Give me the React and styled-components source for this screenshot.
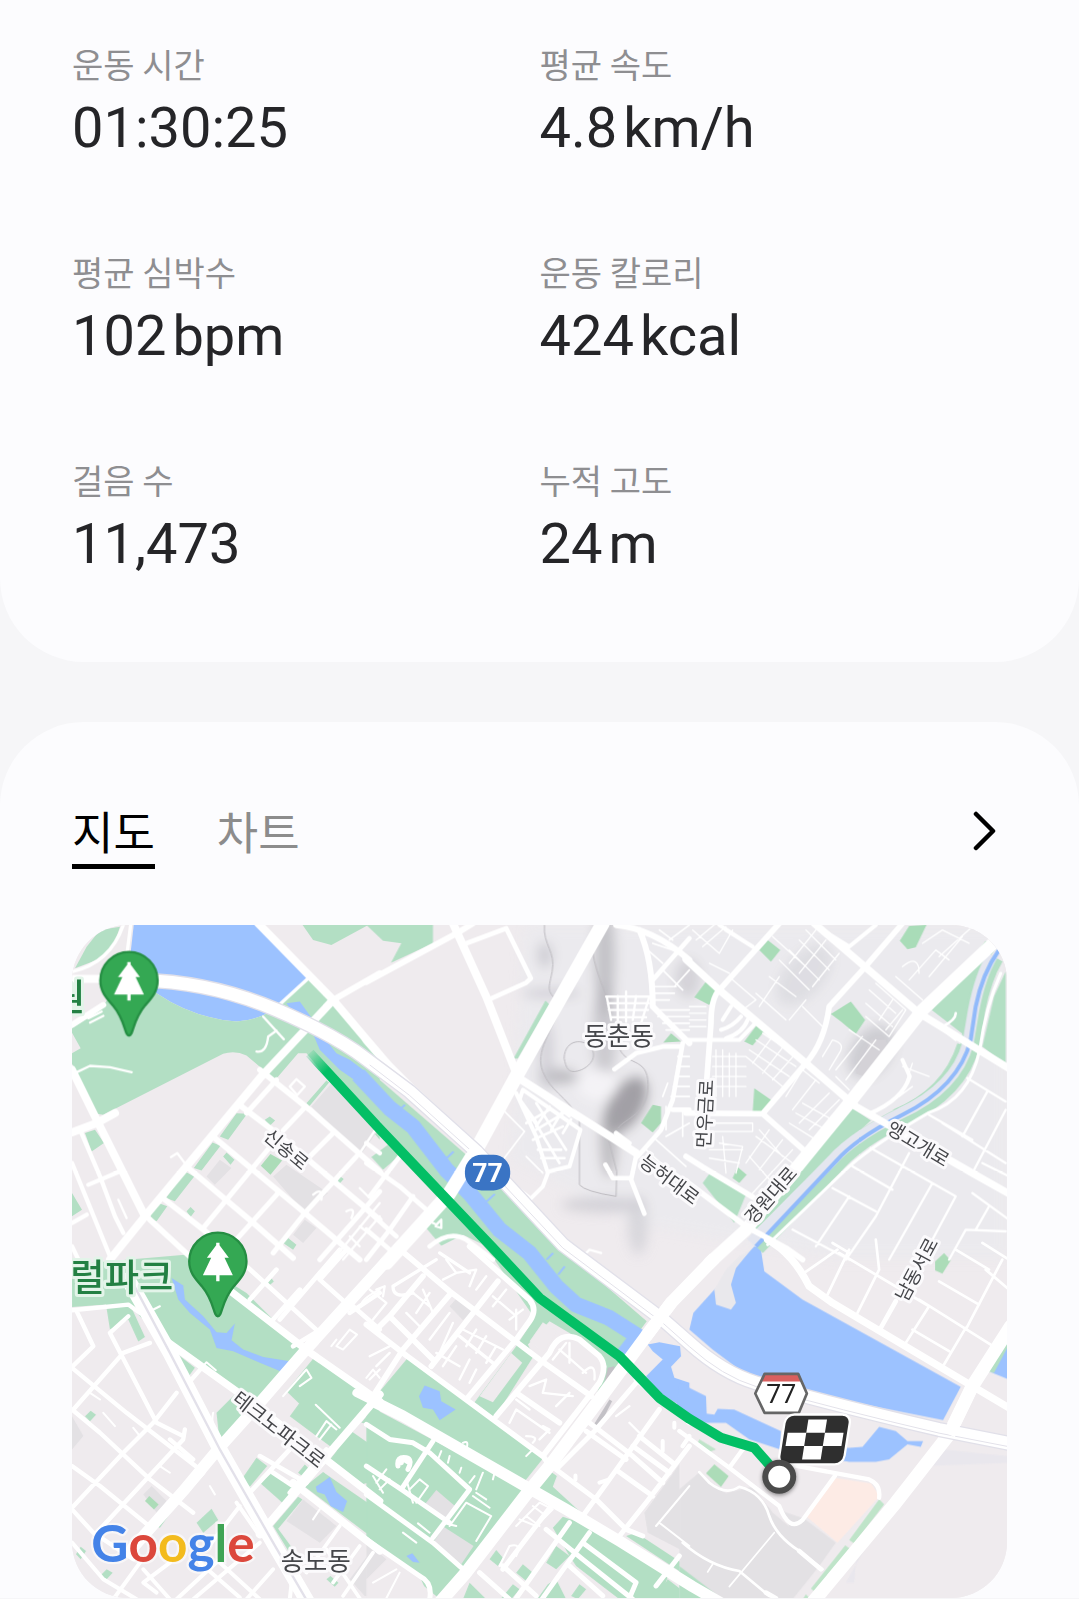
import React, { useState } from "react";
import styled, { createGlobalStyle } from "styled-components";

const GlobalStyle = createGlobalStyle`
  * {
    box-sizing: border-box;
  }
  body {
    margin: 0;
    background: #f6f6f8;
    font-family: "Noto Sans CJK KR", sans-serif;
  }
`;

const Page = styled.main`
  display: flex;
  flex-direction: column;
  gap: 60px;
`;
const StatsCard = styled.section`
  padding: 42px 72px 86px;
  background: #fcfcfe;
  border-radius: 0 0 84px 84px;
`;
const StatsGrid = styled.dl`
  display: grid;
  grid-template-columns: 1fr 1fr;
  row-gap: 90px;
  margin: 0;
`;
const Stat = styled.div`
  display: flex;
  flex-direction: column;
  gap: 10px;
`;
const StatLabel = styled.dt`
  color: #8e8e91;
  font-size: 34px;
  line-height: 44px;
`;
const StatValue = styled.dd`
  display: flex;
  align-items: baseline;
  gap: 6px;
  margin: 0;
  color: #252528;
  font-family: Roboto, sans-serif;
  font-size: 56px;
  line-height: 64px;
`;
const RouteCard = styled.section`
  padding: 81px 72px 0;
  background: #fcfcfe;
  border-radius: 84px 84px 0 0;
`;
const CardHeader = styled.header`
  display: flex;
  align-items: flex-start;
  justify-content: space-between;
  margin-bottom: 56px;
`;
const TabList = styled.div`
  display: flex;
  gap: 62px;
`;
const Tab = styled.button`
  padding: 0 0 5px;
  border: 0;
  border-bottom: 5px solid ${({ $active }) => ($active ? "#000" : "transparent")};
  background: none;
  color: ${({ $active }) => ($active ? "#000" : "#8c8c8c")};
  font-family: inherit;
  font-size: 45px;
  line-height: 56px;
  cursor: pointer;
`;
const MoreButton = styled.button`
  display: flex;
  align-items: center;
  justify-content: center;
  width: 46px;
  height: 56px;
  padding: 0;
  border: 0;
  background: none;
  cursor: pointer;
`;
const MapFrame = styled.div`
  overflow: hidden;
  border-radius: 56px;
  background: #efebee;
`;
const MapSvg = styled.svg`
  display: block;
  width: 100%;
  height: auto;
`;
const MapLabel = styled.text`
  fill: ${({ $park }) => ($park ? "#238043" : "#45464a")};
  stroke: ${({ $park }) => ($park ? "#e3f4e9" : "#fbfafc")};
  stroke-width: 18px;
  stroke-linejoin: round;
  paint-order: stroke;
  font-family: "Noto Sans CJK KR", sans-serif;
  font-size: ${({ $size }) => $size}px;
  font-weight: ${({ $park }) => ($park ? 500 : 400)};
  dominant-baseline: central;
  text-anchor: ${({ $anchor }) => $anchor || "middle"};
`;
const Shield = styled.text`
  fill: ${({ $color }) => $color};
  font-family: Roboto, sans-serif;
  font-size: 80px;
  font-weight: ${({ $weight }) => $weight};
  text-anchor: middle;
`;
const Wordmark = styled.text`
  font-family: Lato, sans-serif;
  font-size: 154px;
  font-weight: 700;
  stroke: #fff;
  stroke-width: 14px;
  stroke-opacity: 0.55;
  paint-order: stroke;
`;

const stats = [
  { label: "운동 시간", value: "01:30:25" },
  { label: "평균 속도", value: "4.8", unit: "km/h" },
  { label: "평균 심박수", value: "102", unit: "bpm" },
  { label: "운동 칼로리", value: "424", unit: "kcal" },
  { label: "걸음 수", value: "11,473" },
  { label: "누적 고도", value: "24", unit: "m" },
];

const GREEN = "#b3dfc4";
const WATER = "#9cc2ff";
const BLOCK = "#e3e1e4";
const LAND = "#efebee";

// The map is cut into six tiles; areas are [fill, path], roads are [width, path].
const tiles = [
  {
    x: -36,
    y: -45,
    areas: [
      [WATER, "M222 40H595L748 208L652 292Q600 330 530 335Q400 325 290 250L205 190Z"],
      [GREEN, "M30 358L120 300L200 190L290 250Q400 325 530 335Q600 330 652 292L748 208L820 270L960 420V690L740 430H715L648 508L605 475L560 437Q525 420 490 432L130 615L110 612L36 462V430L62 415Z"],
      [WATER, "M680 280L720 275L760 330L790 380L830 430L870 450L910 480L960 540V610L920 535L840 480L780 420L755 360L700 310Z"],
      [GREEN, "M45 175L80 110L120 60L180 50L160 110L110 150Z"],
      [GREEN, "M725 40L760 90L815 105L935 40Z"],
      [GREEN, "M530 610L562 612L505 690L480 680ZM458 698L482 708L425 782L402 775ZM375 785L403 800L345 875L318 865ZM295 880L322 890L290 935Q270 930 272 912Z"],
      [GREEN, "M75 670L105 660L132 700L95 725ZM615 630L630 620L646 632L630 648ZM490 740L500 728L524 750L512 765ZM740 580L800 512L808 518L748 590ZM380 905L392 892L405 905L392 922ZM830 818L842 800L852 808L836 826ZM670 1000L685 985L710 1005L700 1020ZM36 850L66 900L36 920Z"],
      [BLOCK, "M640 800L680 765L805 850L735 910ZM755 590L820 515L960 655L900 740ZM440 800L480 750L515 775L465 825ZM700 975L735 930L770 955L730 1000Z"],
      ["#acdcb8", "M603 768L632 733L667 752L632 795Z"],
    ],
    roads: [
      [10, "M36 185Q150 160 190 45M212 45L200 140M745 205L650 292"],
      [24, "M36 207L140 207M595 40L820 270L960 436M820 270L600 505L255 920L150 1050"],
      [18, "M36 345L130 285M820 270L960 190"],
      [24, "M36 480L110 630L255 920M36 668L110 640L165 610"],
      [17, "M600 480L750 600L960 785M545 590L650 670L960 930M465 685L735 910L900 1050M385 775L575 935L700 1045M315 870L430 960L540 1050M270 930L400 1050"],
      [15, "M650 510L560 610M738 590L670 662M820 670L740 750M640 700L430 955M655 850L480 1045M890 740L735 910L640 1030M960 845L780 1050"],
      [13, "M60 660L120 800L165 920L190 970M36 760L150 1040M85 825L180 785M36 940L80 915M36 1010L60 1060"],
      [7, "M50 487L90 468L150 472L215 487M610 320L672 388M590 425Q620 430 625 380L650 362M85 325L125 305M90 338L130 318M333 742L352 730L376 762M900 730L960 640M690 530L710 508L735 530L712 556ZM175 870L200 925M850 840L870 860M900 835L925 860M760 855Q790 830 785 870M860 905Q890 890 875 925"],
      [7, "M820 1050L960 880M850 1050L960 920M870 980L900 1010M900 950L940 980"],
    ],
  },
  {
    x: 894,
    y: -45,
    areas: [
      [GREEN, "M-10 45H190V100L64 158L95 100L40 92Z"],
      [GREEN, "M432 446L528 272L540 284L445 446Z"],
      [GREEN, "M-10 475L290 735L640 1060H390L-10 635ZM165 950L245 862L440 1060L350 1010L280 975L215 1008ZM5 742L62 700L92 735L40 780Z"],
      ["#a9d9b6", "M815 640L850 585L875 590V640L850 668ZM882 398L905 370L935 395Z"],
    ],
    roads: [
      [8, "M522 560L600 620M500 580L590 720M480 610L570 760M505 720H575M515 745H585M490 690L580 650M470 640L540 600M500 660L600 600M575 610L545 660M605 628L580 670M540 590L500 650"],
      [12, "M440 550L500 680L535 790L520 830L480 870M460 540L633 660L600 770L540 785M460 540L450 570L500 640"],
      [24, "M250 40L350 260L440 490M440 500L800 730M-10 390L60 470L120 530L320 715"],
      [18, "M-10 216L270 65L310 40M740 45Q850 55 960 150M810 60Q850 150 850 290L960 400"],
      [14, "M290 100L410 55L484 205L470 218L360 268M850 210L960 85M940 400L910 570L875 660L805 740"],
      [42, "M700 40L530 340L440 500L320 720L240 850L50 1060"],
      [14, "M800 740L785 810L825 912M708 765L730 805L780 805M735 478L800 430L880 410L935 410M780 700L740 670M910 600H960"],
      [7, "M710 260H840M715 280H838M718 300H836M725 322H830M712 260L725 330M745 258V335M770 245V335M800 258L790 330M840 260L815 340"],
      [5, "M850 230H920M850 250H915M850 270H900M860 300H960M865 320H960M880 340H960M890 360H960M915 230L960 180M880 180L940 240M835 120L880 160M850 100L910 120M900 90L960 45M870 60L910 90M925 440H960M922 470H960M918 500H960M912 530H960M905 560H960M890 680L960 640M860 690L950 770M830 720L940 820M940 600V680M890 590V660"],
      [5, "M400 600L465 665L400 750M470 740L520 790M440 830L480 860M880 560L895 520"],
      [14, "M-10 760L90 830L170 900M-10 700L30 730M90 740L0 860M-10 900L80 980M130 860L60 960L-10 1050M-10 960L60 1020M180 1010Q240 960 290 990L370 1050"],
      [7, "M170 930L200 945L215 930V955L198 950M640 1040L660 1020L695 1030"],
    ],
  },
  {
    x: 1854,
    y: -45,
    areas: [
      ["#a9dcb8", "M210 120L235 90L273 120L245 155ZM632 92L660 48L712 45L680 112L655 118ZM15 262L50 215L90 242L60 285ZM165 395L205 342L228 360L190 407ZM190 608L195 535L248 572L215 608ZM425 312L485 275L528 330L500 372L455 335ZM130 805L145 772L172 795L150 820Z"],
      [GREEN, "M728 300L890 92L918 118L860 200L845 290L825 375ZM880 410L915 260L950 185V465ZM40 820L62 790L172 850L135 940ZM490 595L545 632L320 840L200 960L160 960ZM610 600Q760 540 805 400L818 405Q780 540 630 600Z"],
      ["#d4d2d7", "M500 490L545 390L590 390L600 430L540 505Z"],
    ],
    roads: [
      [22, "M375 40L690 310L960 476M-10 148L90 240L350 460L500 590L850 790L960 852"],
      [17, "M270 40L90 240Q65 265 65 340L50 540M640 40L520 180L420 290Q405 400 350 460L220 612L-10 610M220 612L345 722M-10 740L40 772L190 862M-10 815L170 950L290 1015L340 1050"],
      [12, "M-10 390L150 390L200 338L105 250M95 360Q130 350 155 320M100 330L125 290M110 385Q160 370 175 330M190 110L90 45M110 60L190 110M480 110L560 45M400 60L480 110M640 450L662 500Q640 570 540 612"],
      [9, "M935 190Q890 290 872 420Q840 570 720 608Q560 700 480 770L235 1005"],
      [7, "M835 505L950 575M895 545L820 680M720 615L850 690M760 640L950 760M545 715L800 860M490 770L610 840M430 835L560 905M660 730L560 920L470 1050M730 820L600 1050M800 860L730 990M960 930L850 850M310 960L480 1050M480 860L380 1010M860 960L900 890M950 600L850 790M950 965L830 960L780 1050M880 760L960 800"],
      [4, "M130 210L200 270L160 300M200 250L290 330M240 200L320 260M210 290L270 200M300 330L350 270M340 290L400 350M270 150L360 240M300 120L390 210M330 90L420 180M350 60L440 150M300 160L380 60M330 190L410 90M370 230L450 130M250 80L350 170M20 90L80 40M40 110L110 50M10 60L90 130L130 60M60 160L120 190M540 240L620 310M530 280L610 350M560 220L650 300L600 380L530 320M570 330L610 270M590 360L640 300M620 200L700 270M640 170Q690 130 690 190M660 210L740 120L780 150M700 100L760 60L840 100M720 200L820 80M750 140L850 50M400 440L430 390Q470 400 450 430L420 480M440 480L520 380M470 510L560 390M440 500L480 540M480 360L570 420"],
      [4, "M180 420L300 500M170 440L280 530M200 390L320 470M220 370L340 450M190 460L250 380M220 490L290 400M250 510L320 430M290 560L340 480L390 520M310 600L380 510M330 640L420 550M360 660L450 570M300 640L380 690M320 610L410 660M340 580L430 630M80 420V560M100 420V560M120 430V560M140 430V560M70 440H170M70 470H170M70 500H170M70 530H170M0 290H50M0 310H50M0 330H50M0 350H50M60 640H190V665H70M90 700L160 710L140 790M100 680L110 790M60 720H160M60 745L150 760M200 680L310 760M180 740L250 820M210 660L280 740M240 660L170 760M280 690L210 780M310 720L190 850M640 470L720 500M670 460L640 550M630 560L670 530"],
      [38, "M965 50L700 300L480 580L170 960L60 1060"],
      [8, "M725 330L800 390M760 350Q800 330 800 310"],
    ],
  },
  {
    x: -36,
    y: 975,
    areas: [
      [GREEN, "M30 45L200 30L375 15L560 130L730 300L610 450L480 585L470 490L530 430L430 350L320 280L215 175L255 262L235 276L205 210L150 240L138 165L36 172Z"],
      [WATER, "M335 85L370 108L375 150L430 200L470 248L500 250L525 222L515 272L550 300L610 322L690 335L662 365L600 340L520 305L470 295L450 240L390 190L355 150Z"],
      [GREEN, "M760 328L955 440L880 545L830 605L690 500L718 462L680 425ZM335 300L405 355L378 392ZM810 632L875 545L960 605V690L905 705ZM905 520L960 450V530ZM545 690L590 625L622 650L570 712ZM600 700L640 668L712 728L670 762ZM270 825L410 655L415 672L300 835ZM410 820L455 778L475 812L430 850ZM735 712L790 668L960 785V882ZM640 830L715 742L728 750L655 838L700 900L690 912ZM715 670L735 645L750 660L730 682ZM75 500L92 484L108 496L90 515ZM48 915L62 892L78 905L62 930ZM120 980L140 960L158 970L140 990ZM620 92L632 82L642 96L630 106ZM800 990L812 980L836 1000L825 1012Z"],
      [WATER, "M768 712L810 683L830 728L862 755L850 788L812 770L795 735L772 728Z"],
      [BLOCK, "M680 815L730 750L830 830L780 880ZM870 990L930 910L960 930V1040H915ZM250 735L275 710L320 755L290 790ZM36 500L70 560L36 600Z"],
      ["#acdcb8", "M255 755L268 740L296 765L282 780Z"],
    ],
    roads: [
      [13, "M36 182L205 165L240 190M50 185L100 290L36 352M150 250L205 200M150 250L290 520L370 560M270 280L190 310L40 480M36 355L200 490L430 668M36 480L120 550L270 690L400 790M36 650L120 710L280 840M36 780L100 850L220 930M350 430L280 520L190 610L36 775M375 540L370 570L110 850M395 390L430 350M400 630L330 570M430 670L350 760"],
      [12, "M160 1050L240 940M250 960L330 1050M400 1050L600 880M330 940L250 1000L290 1030M440 900L540 770M480 940L600 1050M530 760L600 860M420 940L540 1045M350 1050L480 930M560 1050L640 960M36 880L130 990L230 1050M640 870L700 960L690 1050"],
      [22, "M320 275L530 425L720 570L960 755M480 100L745 305L960 455M700 700L960 905"],
      [14, "M560 50L780 250M880 170L960 240M960 130L870 190M650 60L570 150M720 120L640 210M840 0L660 210M800 230L700 290M860 0L780 90L880 180M560 740L690 600M640 670L700 710M600 620L740 700M690 730L800 600"],
      [11, "M800 900L900 1047M840 830L740 970M900 890L820 1000M940 910L850 1040"],
      [24, "M960 435L720 715L600 855"],
      [34, "M975 40L730 310L600 460L470 605L370 725L215 900"],
      [44, "M205 90L330 310L480 600L640 880L745 1060"],
      [6, "M430 350L440 338L468 362M270 185L300 170M460 490Q450 530 480 560M768 466L840 535M770 560L800 515L830 540M780 570L815 525M670 440L740 360L755 385L720 410M830 290L870 240L892 255L850 300ZM815 290L830 270M905 170Q900 150 960 120M920 385L940 360L960 385M760 810L780 780M130 490L165 530M220 535L240 560M300 650L330 670M450 710L465 735M90 430L120 450"],
    ],
  },
  {
    x: 894,
    y: 975,
    areas: [
      [GREEN, "M340 -20H560L832 215L770 300L742 370L680 438L712 350L690 310L600 250L540 215L475 285L492 320L375 505L315 458L440 290L495 205Z"],
      [LAND, "M330 440L425 310L458 340L370 458ZM480 275L520 218L560 245L520 310Z"],
      [GREEN, "M18 440L112 328L522 625L458 705L30 462ZM-10 465L470 720L280 965L205 1045L-10 868Z"],
      [LAND, "M-10 870L150 980L180 1050H-10Z"],
      [BLOCK, "M165 765L200 722L256 770L222 812ZM190 880L222 832L312 890L275 945ZM-10 880L50 930L-10 990ZM240 170L262 145L310 182L280 212Z"],
      [WATER, "M148 440L165 408L210 425L215 455L258 480L210 512L190 480L160 475ZM835 285L870 278L932 290L935 320L905 352L915 385L960 400V485L870 430L830 380L880 330L850 305ZM110 920L128 912L150 940L130 938Z"],
      [BLOCK, "M970 590L825 790L835 850L960 915Z"],
      [GREEN, "M505 715L545 668L562 680L550 712L635 790L560 765ZM550 835L580 802L640 822L900 970L870 1050L750 1050L620 950L600 920ZM770 860L800 850L960 955V985ZM360 930L380 902L400 925L385 950ZM440 970L460 945L490 970L470 995ZM530 940L560 890L600 920L560 960ZM395 1047L430 1005L450 1020L425 1050ZM505 1047L535 1005L560 990L590 1050ZM605 1040L630 1005L650 1020L625 1050ZM860 1050L895 990L960 1040V1050ZM280 1050L300 1000L350 1050Z"],
      ["#c3c1c6", "M705 400L715 355L735 350L735 375L712 410ZM670 530L720 450L728 455L685 540Z"],
    ],
    roads: [
      [17, "M-10 225L110 318L522 622L545 655M80 -10L240 125L510 330L665 440M300 -10L480 150Q505 180 480 215L440 270L290 450M245 130L100 300L10 440M385 95L185 350M380 500L540 310Q570 240 630 270L690 320Q715 350 690 400L520 620M440 430L570 520M160 80L60 200M30 230L60 200L190 330"],
      [10, "M200 30L70 110Q70 150 130 130M270 260L370 340M210 10L300 70"],
      [15, "M660 520L790 620L880 700M800 400L680 540L560 660M800 390L960 520M960 590L830 760L750 860M870 480L720 690L640 800M560 660L680 750L770 840M790 590L900 670M745 665L850 740M770 840L820 860M810 560L910 640M650 545L770 630"],
      [15, "M-10 525L60 570L130 580L180 610L300 720L190 865M190 575L95 720M-10 650L95 720L240 820M-10 735L190 880L275 955M95 640Q90 620 120 640M-10 870L150 980Q190 1000 180 1050M85 650Q80 620 110 625Q130 630 115 660"],
      [15, "M545 770L400 960M600 820L440 1047M660 850L510 1060M530 840L640 930L790 1050M330 970L420 1050M640 880L800 1000L780 1047M600 950L700 1040M400 950L500 1040M930 920L860 1010"],
      [24, "M-40 430L40 470"],
      [34, "M20 460L100 500L470 712L590 780L750 875L970 1012L1070 1070"],
      [38, "M905 160L830 260L690 450L540 650L470 735L285 975L210 1060"],
      [7, "M130 130L180 170M140 190L180 130M160 120L190 190M110 190L150 230M210 230L240 190L180 270M250 220L210 310M200 310L270 350M220 350L260 290M270 390L300 330M300 400L320 360M280 240L400 300M320 240L290 290M350 260L320 310M380 290L350 340M230 30L260 70L220 90M260 70L320 60L300 110M320 120L350 80M370 170L410 120M370 140L440 200M420 210L460 180M440 180V240M550 330L590 280M570 300L650 370M600 280V340M640 370Q680 330 675 390M480 410L530 390L520 430L610 440M560 470L600 430M420 520L440 480L540 550M440 450L480 480M470 560Q510 560 490 580M520 530L540 540L510 570M740 500L780 470M780 520L810 550M0 120L50 160L10 210M20 120L45 110L40 140M0 320L60 290M20 350L60 310M0 390L30 360"],
      [6, "M205 630L215 605M235 640L240 620M270 670L275 655M300 700L315 680M280 580Q300 570 290 600M340 670L320 720M370 690L375 670M120 720L150 690L175 710L140 760M110 690L130 760M20 700L50 660M30 720L60 690M10 680L40 730M145 822L180 850M100 850L140 880M240 830L290 760L365 800L320 875M310 740L360 775M320 730L350 750M220 820L260 830M440 830L510 760L550 780L500 830L450 810M470 800L510 830M490 770L530 800M390 950L420 890Q460 880 440 920M860 830L960 710M870 820L960 890M10 1000L80 960M50 1047L90 970M470 620L490 600"],
      [12, "M880 575V605M915 520V535M618 678V690M690 700L720 690"],
    ],
  },
  {
    x: 1854,
    y: 975,
    areas: [
      [WATER, "M195 -10L225 -55L215 0L225 65L340 150L815 412L762 512L360 432L200 398L170 375L70 300L0 240L12 190L75 120Z"],
      ["#e9e8ec", "M185 0L140 55L125 105L140 160L125 180L80 165L75 120L110 60L150 20Z"],
      [WATER, "M-30 400L50 440L52 492L75 495L85 478L135 480L200 510L275 545L272 600L180 570L110 520L50 520L-40 490ZM270 600L480 595L520 592L570 532L620 545L655 575L702 575L695 592L655 585L600 630L560 637H480Z"],
      [WATER, "M905 368L960 260V390Z"],
      [GREEN, "M895 365L960 260V285L915 370Z"],
      [BLOCK, "M-30 720L30 668L60 700L110 730L190 712L235 770L345 808L440 880L390 950L310 1050H-30Z"],
      [LAND, "M10 560L270 765L300 832L250 790L190 705L110 730L30 668L-30 720V580Z"],
      ["#fdebe5", "M437 685L545 702L572 740L445 880L350 800Z"],
      ["#bfe4c9", "M570 750L585 765L495 882L480 872ZM468 888L482 898L380 1030L365 1018ZM350 1035L365 1050H340ZM30 570L80 600L60 608L25 580Z"],
      ["#acdcb8", "M50 672L75 645L118 680L95 712ZM738 62V35L765 10L785 32L760 72Z"],
      [GREEN, "M-30 950L100 1050H-30Z"],
      ["#e9e7ed", "M760 600L954 620V640L700 650L560 800L500 940L495 1000L470 1000L560 840Z"],
    ],
    roads: [
      [22, "M235 -30Q310 10 360 110L430 160L850 410L960 475"],
      [13, "M-30 545L120 655L270 770Q300 850 340 812L437 680M120 655L160 600M270 640L540 690Q575 705 570 745M-20 590L0 560"],
      [8, "M30 668L60 700Q110 740 150 712Q220 730 240 800Q260 860 330 905L400 960M-20 880Q60 950 150 965L240 1040"],
      [5, "M255 850L120 1012M55 968L70 945"],
      [14, "M330 905L395 960M620 155L575 235M230 1030L260 1047"],
      [8, "M480 0L415 135M445 0L345 70M560 -30L570 60L505 190M450 10L720 170M720 170L650 280M690 150L905 285M750 95L870 165M830 235L765 345M670 240L780 305M940 30L830 240M890 60L960 120M880 -20L960 30M800 0L900 60M430 -20L480 10"],
      [40, "M965 230L850 410L780 555L620 760L370 1060"],
    ],
  },
];

const labels = [
  { text: "신송로", x: 647, y: 670, size: 56, angle: 40 },
  { text: "능허대로", x: 1798, y: 760, size: 56, angle: 37 },
  { text: "먼우금로", x: 1896, y: 567, size: 56, angle: -87 },
  { text: "경원대로", x: 2094, y: 808, size: 56, angle: -49 },
  { text: "앵고개로", x: 2544, y: 653, size: 56, angle: 31 },
  { text: "남동서로", x: 2532, y: 1032, size: 56, angle: -62 },
  { text: "테크노파크로", x: 624, y: 1512, size: 60, angle: 38 },
  { text: "동춘동", x: 1642, y: 328, size: 76 },
  { text: "송도동", x: 732, y: 1905, size: 76 },
  { text: "럴파크", x: 304, y: 1052, size: 112, park: true, anchor: "end" },
  { text: "원", x: 40, y: 210, size: 112, park: true, anchor: "end" },
];

const routePath =
  "M714 385L924 612L1264 970L1404 1120L1644 1295L1764 1420L1854 1483L1949 1540L2049 1570L2124 1655";

const ParkPin = ({ x, y }) => (
  <g transform={`translate(${x} ${y})`}>
    <path
      d="M0 165C-14 165 -10 120 -48 75C-70 50 -86 32 -86 0A86 86 0 0 1 86 0C86 32 70 50 48 75C10 120 14 165 0 165Z"
      fill="#34a853"
      stroke="#258e43"
      strokeWidth="7"
    />
    <path
      d="M-5 -56H5V-48L33 -11H20L45 42H5V60H-5V42H-45L-20 -11H-33L-5 -48Z"
      fill="#fff"
    />
  </g>
);

const HillShade = () => (
  <g filter="url(#haze)">
    <path d="M1360 0H2808V1000H2300L1700 900L1320 700Z" fill="#e9e9ee" opacity="0.75" />
    <ellipse cx="1600" cy="100" rx="32" ry="180" fill="#a9a8ad" opacity="0.6" />
    <ellipse cx="1600" cy="320" rx="38" ry="150" fill="#b5b4ba" opacity="0.6" />
    <ellipse cx="1665" cy="540" rx="52" ry="95" fill="#8f8d92" opacity="0.8" transform="rotate(30 1665 540)" />
    <ellipse cx="1612" cy="650" rx="28" ry="110" fill="#a3a2a7" opacity="0.6" />
    <ellipse cx="1460" cy="455" rx="60" ry="24" fill="#aaa8ae" opacity="0.7" />
    <ellipse cx="1425" cy="390" rx="22" ry="110" fill="#c9c8ce" opacity="0.7" />
    <ellipse cx="1580" cy="480" rx="60" ry="45" fill="#f4f3f6" />
    <ellipse cx="1440" cy="205" rx="90" ry="16" fill="#c9c8ce" opacity="0.7" />
    <ellipse cx="1600" cy="840" rx="130" ry="24" fill="#c9c8ce" opacity="0.7" />
    <ellipse cx="1700" cy="900" rx="30" ry="90" fill="#cfced4" opacity="0.7" />
    <ellipse cx="1420" cy="90" rx="24" ry="40" fill="#d0cfd5" />
    <ellipse cx="1850" cy="160" rx="40" ry="60" fill="#c4c3c9" opacity="0.6" />
    <ellipse cx="2200" cy="150" rx="60" ry="110" fill="#dad9df" opacity="0.8" transform="rotate(40 2200 150)" />
    <ellipse cx="2400" cy="380" rx="60" ry="90" fill="#c6c5ca" opacity="0.8" transform="rotate(35 2400 380)" />
  </g>
);

const RouteMap = () => (
  <MapSvg viewBox="0 0 2808 2022" role="img" aria-label="운동 경로 지도">
    <defs>
      <filter id="haze" x="-10%" y="-10%" width="120%" height="120%">
        <feGaussianBlur stdDeviation="18" />
      </filter>
      <linearGradient id="routeFade" gradientUnits="userSpaceOnUse" x1="706" y1="376" x2="764" y2="438">
        <stop offset="0" stopColor="#03bf65" stopOpacity="0" />
        <stop offset="1" stopColor="#03bf65" />
      </linearGradient>
      <filter id="dotShadow" x="-50%" y="-50%" width="200%" height="200%">
        <feDropShadow dx="0" dy="4" stdDeviation="6" floodOpacity="0.45" />
      </filter>
    </defs>
    <rect width="2808" height="2022" fill={LAND} />
    <HillShade />

    {tiles.map((tile, index) => (
      <g key={index} transform={`translate(${tile.x} ${tile.y})`}>
        {tile.areas.map(([fill, d], i) => (
          <path key={i} d={d} fill={fill} />
        ))}
      </g>
    ))}

    {/* canal beside the route and the creek on the east side */}
    <g fill="none" strokeLinejoin="round">
      <path
        d="M860 450L954 550L1024 605L1124 735L1194 805L1284 915L1374 985L1454 1085L1514 1140L1614 1180L1700 1235L1650 1300"
        stroke={WATER}
        strokeWidth="48"
      />
      <path
        d="M984 555L1000 540M1120 705L1146 680M1240 835L1270 808M1425 1005L1445 985M1460 1050L1480 1025"
        stroke={WATER}
        strokeWidth="6"
      />
      <path
        d="M2770 95Q2734 155 2714 255L2699 355Q2664 495 2494 575Q2354 645 2294 715L2054 965"
        stroke={GREEN}
        strokeWidth="58"
      />
      <path
        d="M2764 91Q2728 151 2708 255L2691 355Q2656 488 2488 566Q2346 636 2284 706L2040 955"
        stroke="#e4e6ef"
        strokeWidth="34"
      />
      <path
        d="M2784 75Q2734 145 2714 245L2699 345Q2664 485 2494 570Q2354 640 2294 710L2054 965"
        stroke="#91bafb"
        strokeWidth="12"
      />
    </g>

    {/* contour lines of the hill */}
    <g fill="none" stroke="#bdbbc0" strokeWidth="3">
      <path d="M1419 0C1414 60 1454 80 1442 140S1424 195 1469 240C1440 320 1390 380 1414 440S1480 510 1524 580V780Q1540 800 1634 815L1636 740L1610 640" />
      <path d="M1564 80Q1570 130 1604 210M1478 400C1480 340 1540 340 1560 370S1550 430 1520 438S1484 430 1478 400M1640 360C1660 430 1730 390 1730 480S1660 580 1640 610" />
    </g>

    {tiles.map((tile, index) => (
      <g
        key={index}
        transform={`translate(${tile.x} ${tile.y})`}
        fill="none"
        stroke="#fff"
        strokeLinecap="round"
        strokeLinejoin="round"
      >
        {tile.roads.map(([width, d], i) => (
          <path key={i} d={d} strokeWidth={width} />
        ))}
      </g>
    ))}

    {/* railway down the west side */}
    <path d="M185 1080L294 1285L444 1575L604 1855L709 2035" fill="none" stroke="#e3e1ea" strokeWidth="7" />

    {/* expressway */}
    <g fill="none" strokeLinejoin="round">
      <path
        d="M254 168Q440 180 614 255T880 400L1014 500L1214 680L1474 960L1774 1185L1854 1255Q1954 1345 2054 1375Q2304 1445 2604 1515L2820 1558"
        stroke="#e1e0e9"
        strokeWidth="46"
      />
      <path
        d="M254 168Q440 180 614 255T880 400L1014 500L1214 680L1474 960L1774 1185L1854 1255Q1954 1345 2054 1375Q2304 1445 2604 1515L2820 1558"
        stroke="#fff"
        strokeWidth="38"
      />
      <path
        d="M894 420L1014 512L1214 692L1474 970L1774 1195L1854 1266Q1954 1356 2054 1386Q2304 1456 2604 1526L2820 1568"
        stroke="#e3e2ea"
        strokeWidth="3"
      />
    </g>
    <path
      d="M1214 675L1134 805M1930 1000L1799 1135L1724 1235M2704 1385L2634 1530"
      fill="none"
      stroke="#fff"
      strokeWidth="38"
      strokeLinejoin="round"
    />

    <path d={routePath} fill="none" stroke="url(#routeFade)" strokeWidth="30" strokeLinejoin="round" />

    {labels.map(({ text, x, y, size, angle = 0, park, anchor }) => (
      <MapLabel
        key={text}
        $size={size}
        $park={park}
        $anchor={anchor}
        transform={`translate(${x} ${y}) rotate(${angle})`}
      >
        {text}
      </MapLabel>
    ))}

    <ParkPin x={171} y={167} />
    <ParkPin x={438} y={1010} />

    <rect x="1180" y="690" width="136" height="107" rx="50" fill="#3a74c4" />
    <Shield x="1248" y="771" $color="#fff" $weight={700}>77</Shield>

    <g transform="translate(1854 975)">
      <path d="M198 432L226 373H327L353 432L329 490H226Z" fill="#fff" />
      <path d="M226 373H327L337 396H215Z" fill="#d95f5f" />
      <path d="M198 432L226 373H327L353 432L329 490H226Z" fill="none" stroke="#666" strokeWidth="8" strokeLinejoin="round" />
      <Shield x="276" y="460" $color="#222" $weight={400}>77</Shield>

      <g transform="translate(376 570) skewX(-9)">
        <rect x="-98" y="-75" width="196" height="150" rx="26" fill="#2f2f2f" stroke="#fff" strokeWidth="7" />
        <path d="M-28 -60H28V-20H-28ZM-84 -20H-28V20H-84ZM28 -20H84V20H28ZM-28 20H28V60H-28Z" fill="#fff" />
      </g>
      <circle cx="270" cy="682" r="42" fill="#fff" stroke="#4c4c4c" strokeWidth="18" filter="url(#dotShadow)" />
    </g>

    <Wordmark x="58" y="1914">
      <tspan fill="#4483e8">G</tspan>
      <tspan fill="#dc483c">o</tspan>
      <tspan fill="#f3bb1d">o</tspan>
      <tspan fill="#4483e8">g</tspan>
      <tspan fill="#3fa455">l</tspan>
      <tspan fill="#dc483c">e</tspan>
    </Wordmark>
  </MapSvg>
);

const App = () => {
  const [tab, setTab] = useState("지도");

  return (
    <>
      <GlobalStyle />
      <Page>
        <StatsCard>
          <StatsGrid>
            {stats.map(({ label, value, unit }) => (
              <Stat key={label}>
                <StatLabel>{label}</StatLabel>
                <StatValue>
                  <span>{value}</span>
                  {unit && <span>{unit}</span>}
                </StatValue>
              </Stat>
            ))}
          </StatsGrid>
        </StatsCard>

        <RouteCard>
          <CardHeader>
            <TabList role="tablist">
              {["지도", "차트"].map((name) => (
                <Tab
                  key={name}
                  type="button"
                  role="tab"
                  aria-selected={tab === name}
                  $active={tab === name}
                  onClick={() => setTab(name)}
                >
                  {name}
                </Tab>
              ))}
            </TabList>
            <MoreButton type="button" aria-label="자세히 보기">
              <svg width="24" height="40" viewBox="0 0 24 40" fill="none">
                <path
                  d="M4 3L21 20L4 37"
                  stroke="#000"
                  strokeWidth="4.5"
                  strokeLinecap="round"
                  strokeLinejoin="round"
                />
              </svg>
            </MoreButton>
          </CardHeader>
          <MapFrame>
            <RouteMap />
          </MapFrame>
        </RouteCard>
      </Page>
    </>
  );
};

export default App;
